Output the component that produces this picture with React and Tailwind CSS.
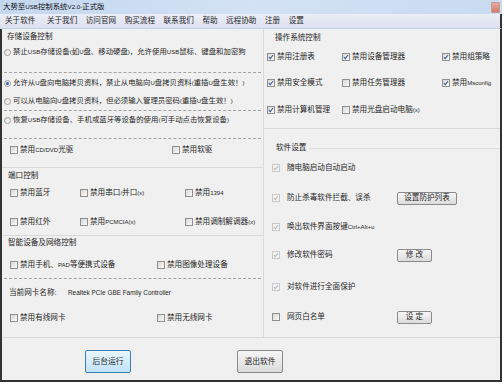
import React from "react";

const FONT = { fontFamily: '"Liberation Sans", "Noto Sans CJK SC", sans-serif' };

function T({ children, latin = "text-[6px]" }) {
  const parts = String(children).split(/([\x21-\x7e][\x20-\x7e]*[\x21-\x7e]|[\x21-\x7e])/);
  return (
    <span className="whitespace-nowrap">
      {parts.map((p, i) =>
        i % 2 === 1 ? (
          <span key={i} className={latin}>
            {p}
          </span>
        ) : (
          <React.Fragment key={i}>{p}</React.Fragment>
        )
      )}
    </span>
  );
}

function Box({ checked, disabled }) {
  return (
    <span
      className={
        disabled
          ? "relative inline-flex w-[8px] h-[8px] shrink-0 border border-[#c9c9c9] bg-[#f3f3f3]"
          : "relative inline-flex w-[8px] h-[8px] shrink-0 border border-[#8f8f8f] bg-gradient-to-br from-[#d8d8d8] to-[#fbfbfb]"
      }
    >
      {checked && (
        <svg viewBox="0 0 6 6" className="absolute left-0 top-0 w-[6px] h-[6px]">
          <path
            d="M0.9 3.1 L2.3 4.6 L5.1 1.0"
            fill="none"
            stroke={disabled ? "#b9b9b9" : "#3d5b98"}
            strokeWidth="1.1"
          />
        </svg>
      )}
    </span>
  );
}

function Radio({ on }) {
  return (
    <span className="relative inline-flex items-center justify-center w-[7px] h-[7px] shrink-0 rounded-full border border-[#9c9c9c] bg-gradient-to-br from-[#dcdcdc] to-[#ffffff]">
      {on && <span className="w-[3px] h-[3px] rounded-full bg-[#2f66b3]" />}
    </span>
  );
}

function Check({ label, checked, disabled }) {
  return (
    <div className="flex items-center gap-[2px]">
      <Box checked={checked} disabled={disabled} />
      <T>{label}</T>
    </div>
  );
}

function Dash({ className = "" }) {
  return <div className={"border-t border-dashed border-[#a3a3a3] " + className} />;
}

function Sep({ className = "" }) {
  return <div className={"h-px bg-[#d9d9d9] " + className} />;
}

function Btn({ children, className = "" }) {
  return (
    <div
      className={
        "flex items-center justify-center rounded-[2px] border border-[#8a8a8a] bg-gradient-to-b from-[#f6f6f6] to-[#dcdcdc] whitespace-nowrap " +
        className
      }
    >
      {children}
    </div>
  );
}

export default function App() {
  const menu = ["关于软件", "关于我们", "访问官网", "购买流程", "联系我们", "帮助", "远程协助", "注册", "设置"];
  return (
    <div className="w-[504px] h-[386px] bg-white text-[#262626] text-[7.6px] leading-none overflow-hidden" style={FONT}>
      {/* title bar */}
      <div className="h-[14px] w-[502px] flex items-center justify-between bg-gradient-to-r from-[#c3d7ef] via-[#d3e2f4] to-[#c9dbf1] pl-[3px] pr-[2px]">
        <span className="text-[7.4px] text-[#111]">
          <T latin="text-[6.2px]">大势至USB控制系统V2.0-正式版</T>
        </span>
        <span className="w-[9px] h-[11px] rounded-[1px] border border-[#c99a90] bg-gradient-to-b from-[#e6aca0] to-[#cf7c6c]" />
      </div>
      {/* menu bar */}
      <div className="h-[15px] w-[502px] flex items-center gap-[8.5px] pl-[5px] bg-gradient-to-b from-[#eceef7] to-[#dce1ef] border-b border-[#c9cee0] border-r-2 border-r-[#333]">
        {menu.map((m, i) => (
          <span key={m} className={i === 0 ? "mr-[3px] whitespace-nowrap" : "whitespace-nowrap"}>
            {m}
          </span>
        ))}
      </div>
      {/* body */}
      <div className="w-[502px] h-[353px] bg-[#f0f0f0] border-l-2 border-r-2 border-b-2 border-[#333] flex flex-col">
        <div className="h-[308px] flex">
          {/* left column */}
          <div className="w-[262px] flex flex-col border-r border-[#dadada]">
            <div className="mt-[1px] h-[14px] flex items-center pl-[5px]">存储设备控制</div>
            <div className="mt-[1px] h-[14px] flex items-center gap-[2px] pl-[2px] text-[7.4px]">
              <Radio />
              <T>禁止USB存储设备(如U盘、移动硬盘)，允许使用USB鼠标、键盘和加密狗</T>
            </div>
            <Dash className="mt-[13px] mx-[2px]" />
            <div className="mt-[3px] h-[14px] flex items-center gap-[2px] pl-[2px] text-[7.4px]">
              <Radio on />
              <T>允许从U盘向电脑拷贝资料，禁止从电脑向U盘拷贝资料(重插U盘生效！)</T>
            </div>
            <div className="mt-[4px] h-[14px] flex items-center gap-[2px] pl-[2px] text-[7.4px]">
              <Radio />
              <T>可以从电脑向U盘拷贝资料，但必须输入管理员密码(重插U盘生效！)</T>
            </div>
            <Dash className="mt-[2px] mx-[2px]" />
            <div className="mt-[2px] h-[14px] flex items-center gap-[2px] pl-[2px] text-[7.4px]">
              <Radio />
              <T>恢复USB存储设备、手机或蓝牙等设备的使用(可手动点击恢复设备)</T>
            </div>
            <Dash className="mt-[11px] mx-[2px]" />
            <div className="mt-[4px] h-[14px] grid grid-cols-[162px_1fr] items-center pl-[8px]">
              <Check label="禁用CD/DVD光驱" />
              <Check label="禁用软驱" />
            </div>
            <Sep className="mt-[10px]" />
            <div className="mt-[1px] h-[14px] flex items-center pl-[6px]">端口控制</div>
            <div className="mt-[3px] h-[14px] grid grid-cols-[70px_105px_1fr] items-center pl-[8px]">
              <Check label="禁用蓝牙" />
              <Check label="禁用串口/并口(x)" />
              <Check label="禁用1394" />
            </div>
            <div className="mt-[15px] h-[14px] grid grid-cols-[70px_105px_1fr] items-center pl-[8px]">
              <Check label="禁用红外" />
              <Check label="禁用PCMCIA(x)" />
              <Check label="禁用调制解调器(x)" />
            </div>
            <Sep className="mt-[6px]" />
            <div className="h-[14px] flex items-center pl-[6px]">智能设备及网络控制</div>
            <div className="mt-[8px] h-[14px] grid grid-cols-[147px_1fr] items-center pl-[8px]">
              <Check label="禁用手机、PAD等便携式设备" />
              <Check label="禁用图像处理设备" />
            </div>
            <Dash className="mt-[6px] mx-[2px]" />
            <div className="mt-[7px] h-[14px] flex items-center pl-[7px]">
              <span className="w-[59px]">当前网卡名称:</span>
              <span className="text-[6.4px]">Realtek PCIe GBE Family Controller</span>
            </div>
            <div className="mt-[11px] h-[14px] grid grid-cols-[147px_1fr] items-center pl-[8px]">
              <Check label="禁用有线网卡" />
              <Check label="禁用无线网卡" />
            </div>
          </div>
          {/* right column */}
          <div className="flex-1 flex flex-col">
            <div className="mt-[2px] h-[14px] flex items-center pl-[11px]">操作系统控制</div>
            <div className="mt-[5px] h-[14px] grid grid-cols-[75px_100px_1fr] items-center pl-[3px]">
              <Check label="禁用注册表" checked />
              <Check label="禁用设备管理器" checked />
              <Check label="禁用组策略" checked />
            </div>
            <div className="mt-[12px] h-[14px] grid grid-cols-[75px_100px_1fr] items-center pl-[3px]">
              <Check label="禁用安全模式" checked />
              <Check label="禁用任务管理器" />
              <Check label="禁用Msconfig" checked />
            </div>
            <div className="mt-[13px] h-[14px] grid grid-cols-[75px_100px_1fr] items-center pl-[3px]">
              <Check label="禁用计算机管理" checked />
              <Check label="禁用光盘启动电脑(x)" />
            </div>
            <Sep className="mt-[11px]" />
            <div className="mt-[12px] h-[14px] flex items-center gap-[3px] pl-[12px]">
              <span className="whitespace-nowrap">软件设置</span>
              <div className="flex-1 h-px bg-[#dcdcdc]" />
            </div>
            <div className="flex flex-col pl-[8px]">
              {[
                { t: "随电脑启动自动启动", mt: "mt-[6px]", c: true, d: true },
                { t: "防止杀毒软件拦截、误杀", mt: "mt-[16px]", c: true, d: true, b: "设置防护列表", bw: "w-[60px]" },
                { t: "唤出软件界面按键Ctrl+Alt+u", mt: "mt-[15px]", c: true, d: true },
                { t: "修改软件密码", mt: "mt-[14px]", c: true, d: true, b: "修 改", bw: "w-[35px]" },
                { t: "对软件进行全面保护", mt: "mt-[18px]", c: true, d: true },
                { t: "网页白名单", mt: "mt-[16px]", c: false, d: false, b: "设 定", bw: "w-[35px]" },
              ].map((r) => (
                <div key={r.t} className={r.mt + " h-[14px] flex items-center"}>
                  <Box checked={r.c} disabled={r.d} />
                  <span className="ml-[7px] w-[110px]">
                    <T>{r.t}</T>
                  </span>
                  {r.b && <Btn className={r.bw + " h-[13px]"}>{r.b}</Btn>}
                </div>
              ))}
            </div>
          </div>
        </div>
        <Sep />
        <div className="flex-1 flex items-start pt-[12px] pl-[83px]">
          <div className="w-[46px] h-[23px] flex items-center justify-center rounded-[2px] border border-[#3c7fb1] bg-gradient-to-b from-[#eaf6fd] to-[#bfe4f8] text-[7.8px]">
            后台运行
          </div>
          <Btn className="ml-[106px] w-[46px] h-[23px] text-[7.8px]">退出软件</Btn>
        </div>
      </div>
    </div>
  );
}
